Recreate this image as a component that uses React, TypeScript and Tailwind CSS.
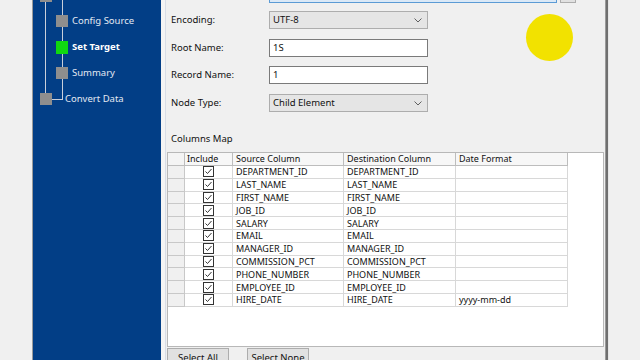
import React from "react";

const rows: [string, string][] = [
  ["DEPARTMENT_ID", ""],
  ["LAST_NAME", ""],
  ["FIRST_NAME", ""],
  ["JOB_ID", ""],
  ["SALARY", ""],
  ["EMAIL", ""],
  ["MANAGER_ID", ""],
  ["COMMISSION_PCT", ""],
  ["PHONE_NUMBER", ""],
  ["EMPLOYEE_ID", ""],
  ["HIRE_DATE", "yyyy-mm-dd"],
];

function Chevron() {
  return (
    <svg width="8" height="5" viewBox="0 0 8 5" className="mr-[5px]">
      <path d="M0.5 0.5 L4 4 L7.5 0.5" fill="none" stroke="#606060" strokeWidth="1" />
    </svg>
  );
}

function Check() {
  return (
    <div className="w-[11px] h-[11px] border border-[#333333] bg-white flex items-center justify-center">
      <svg width="9" height="9" viewBox="0 0 9 9">
        <path d="M1.5 4.5 L3.5 6.5 L7.5 2" fill="none" stroke="#333333" strokeWidth="1" />
      </svg>
    </div>
  );
}

function Row({ label, children, mt }: { label: string; children: React.ReactNode; mt: string }) {
  return (
    <div className={`flex shrink-0 items-center h-[18px] ${mt}`}>
      <div className="w-[103px] pl-[5px] text-[9.5px] text-[#111]">{label}</div>
      {children}
    </div>
  );
}

export default function App() {
  const font = { fontFamily: '"Noto Sans", "Open Sans", sans-serif' };
  return (
    <div className="w-[640px] h-[360px] overflow-hidden flex bg-[#f0f0f0] relative" style={font}>
      {/* left strip */}
      <div className="w-[33px] shrink-0 h-full bg-[#f0f0f0] border-r border-[#9a9a9a]" />
      {/* sidebar */}
      <div className="w-[128px] shrink-0 h-full bg-[#023e86] relative text-[9.5px] text-[#e4e9f2]">
        <svg className="absolute left-0 top-0" width="128" height="120">
          <line x1="12.5" y1="0" x2="12.5" y2="93" stroke="#c9cfda" strokeWidth="1" />
          <line x1="29.5" y1="0" x2="29.5" y2="99.5" stroke="#c9cfda" strokeWidth="1" />
          <line x1="19" y1="99.5" x2="30" y2="99.5" stroke="#c9cfda" strokeWidth="1" />
          <rect x="7" y="-10" width="12" height="12" fill="#8e8e8e" />
        </svg>
        <div className="relative flex flex-col pt-[8px]">
          <div className="flex items-center h-[26px] pl-[23px]">
            <div className="w-[12px] h-[12px] bg-[#8e8e8e]" />
            <span className="ml-[4px]">Config Source</span>
          </div>
          <div className="flex items-center h-[26px] pl-[23px]">
            <div className="w-[12px] h-[13px] bg-[#10d810]" />
            <span className="ml-[4px] font-bold text-white">Set Target</span>
          </div>
          <div className="flex items-center h-[26px] pl-[23px]">
            <div className="w-[12px] h-[12px] bg-[#8e8e8e]" />
            <span className="ml-[4px]">Summary</span>
          </div>
          <div className="flex items-center h-[26px] pl-[7px]">
            <div className="w-[12px] h-[12px] bg-[#8e8e8e]" />
            <span className="ml-[13px]">Convert Data</span>
          </div>
        </div>
      </div>
      {/* splitter */}
      <div className="w-[5px] shrink-0 h-full bg-[#f4f4f4] border-r border-[#d8dde6]" />
      {/* panel */}
      <div className="w-[439px] shrink-0 h-full flex flex-col bg-[#f0f0f0]">
        <div className="flex shrink-0 h-[3px]">
          <div className="ml-[103px] w-[288px] h-[3px] border-x border-b border-[#5b9bd5] bg-[#dbe9f7]" />
          <div className="ml-[3px] w-[16px] h-[3px] border-x border-b border-[#adadad] bg-[#e1e1e1]" />
        </div>
        <Row label="Encoding:" mt="mt-[8px]">
          <div className="w-[159px] h-[18px] bg-[#e5e5e5] border border-[#adadad] flex items-center justify-between text-[9.5px] pl-[3px] text-[#111]">
            <span>UTF-8</span>
            <Chevron />
          </div>
        </Row>
        <Row label="Root Name:" mt="mt-[10px]">
          <div className="w-[159px] h-[18px] bg-white border border-[#7a7a7a] flex items-center text-[9.5px] pl-[3px] text-[#111]">1S</div>
        </Row>
        <Row label="Record Name:" mt="mt-[9px]">
          <div className="w-[159px] h-[18px] bg-white border border-[#7a7a7a] flex items-center text-[9.5px] pl-[3px] text-[#111]">1</div>
        </Row>
        <Row label="Node Type:" mt="mt-[10px]">
          <div className="w-[159px] h-[18px] bg-[#e5e5e5] border border-[#adadad] flex items-center justify-between text-[9.5px] pl-[3px] text-[#111]">
            <span>Child Element</span>
            <Chevron />
          </div>
        </Row>
        <div className="shrink-0 mt-[20px] pl-[5px] text-[9.5px] leading-[14px] text-[#111]">Columns Map</div>
        {/* grid */}
        <div className="shrink-0 mt-[6px] ml-[1px] w-[437px] h-[195px] bg-white border border-[#b8b8b8] text-[9px] text-[#111]">
          <div className="flex h-[13px]">
            <div className="w-[17px] bg-[#f4f4f4] border-r border-b border-[#bdbdbd]" />
            <div className="w-[48px] bg-[#f7f7f7] border-r border-b border-[#bdbdbd] pl-[2px] flex items-center">Include</div>
            <div className="w-[111px] bg-[#f7f7f7] border-r border-b border-[#bdbdbd] pl-[3px] flex items-center">Source Column</div>
            <div className="w-[112px] bg-[#f7f7f7] border-r border-b border-[#bdbdbd] pl-[3px] flex items-center">Destination Column</div>
            <div className="w-[112px] bg-[#f7f7f7] border-r border-b border-[#bdbdbd] pl-[3px] flex items-center">Date Format</div>
          </div>
          {rows.map(([name, fmt]) => (
            <div key={name} className="flex h-[12.8px] leading-[11px]">
              <div className="w-[17px] bg-[#f0f0f0] border-r border-b border-[#c8c8c8]" />
              <div className="w-[48px] border-r border-b border-[#d8d8d8] flex items-center justify-center">
                <Check />
              </div>
              <div className="w-[111px] border-r border-b border-[#d8d8d8] pl-[3px] whitespace-nowrap flex items-center">{name}</div>
              <div className="w-[112px] border-r border-b border-[#d8d8d8] pl-[3px] whitespace-nowrap flex items-center">{name}</div>
              <div className="w-[112px] border-r border-b border-[#d8d8d8] pl-[3px] whitespace-nowrap flex items-center">{fmt}</div>
            </div>
          ))}
        </div>
        <div className="flex shrink-0 mt-[1px] ml-[1px] gap-[18px]">
          <div className="w-[62px] h-[20px] bg-[#e1e1e1] border border-[#adadad] text-[9.5px] text-[#111] flex justify-center pt-[2px]">Select All</div>
          <div className="w-[62px] h-[20px] bg-[#e1e1e1] border border-[#adadad] text-[9.5px] text-[#111] flex justify-center pt-[2px]">Select None</div>
        </div>
      </div>
      {/* right dark line */}
      <div className="w-[3px] shrink-0 h-full bg-[#6f6f6f] border-l border-[#9a9a9a]" />
      <div className="flex-1 h-full bg-[#f0f0f0] border-l border-[#e6e6e6]" />
      {/* cursor highlight */}
      <div className="absolute left-[526px] top-[14px] w-[47px] h-[47px] rounded-full bg-[#f2e200]" />
    </div>
  );
}
